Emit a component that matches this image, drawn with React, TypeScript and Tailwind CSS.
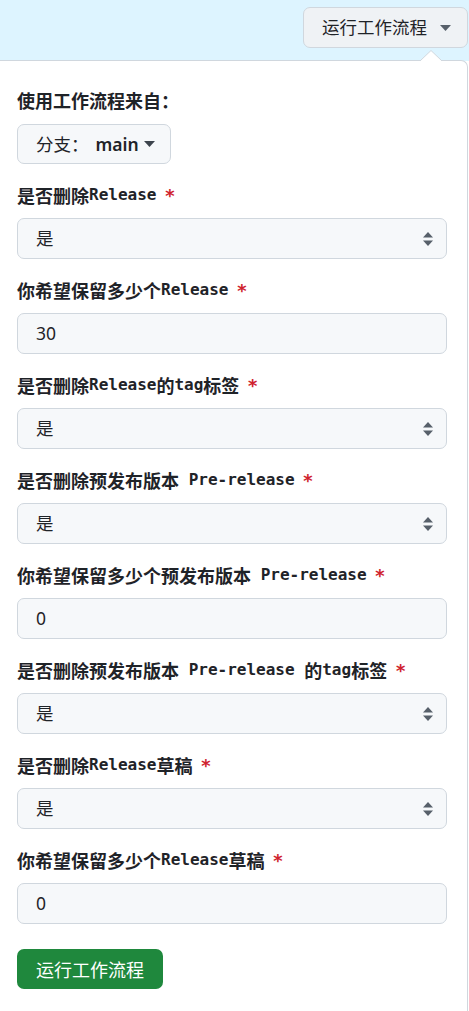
import React from "react";

const CJK = '"Noto Sans CJK SC", "Noto Sans", sans-serif';
const MONO = '"DejaVu Sans Mono", "Liberation Mono", monospace';

function Label({ parts }: { parts: { t: string; mono?: boolean }[] }) {
  return (
    <div className="flex items-center h-[24px] mb-[11px] text-[18px] font-semibold text-[#1f2328] whitespace-pre" style={{ fontFamily: CJK }}>
      {parts.map((p, i) =>
        p.mono ? (
          <span key={i} className="text-[16px] font-bold" style={{ fontFamily: MONO }}>
            {p.t}
          </span>
        ) : (
          <span key={i}>{p.t}</span>
        )
      )}
      <span className="ml-[8px] text-[#cf222e] font-bold" style={{ fontFamily: MONO }}>*</span>
    </div>
  );
}

function SelectBox({ value }: { value: string }) {
  return (
    <div className="flex items-center justify-between h-[41px] w-[430px] rounded-[7px] border border-[#d0d7de] bg-[#f6f8fa] pl-[18px] pr-[13px] text-[17.5px] text-[#1f2328]" style={{ fontFamily: CJK }}>
      <span>{value}</span>
      <svg width="10" height="16" viewBox="0 0 10 16">
        <path d="M0 6.5 L5 1 L10 6.5 Z" fill="#57606a" />
        <path d="M0 9.5 L5 15 L10 9.5 Z" fill="#57606a" />
      </svg>
    </div>
  );
}

function InputBox({ value }: { value: string }) {
  return (
    <div className="flex items-center h-[41px] w-[430px] rounded-[7px] border border-[#d0d7de] bg-[#f6f8fa] pl-[18px] text-[17.5px] text-[#1f2328]" style={{ fontFamily: '"Noto Sans", sans-serif' }}>
      {value}
    </div>
  );
}

function Field({ parts, kind, value }: { parts: { t: string; mono?: boolean }[]; kind: "select" | "input"; value: string }) {
  return (
    <div className="mb-[19px]">
      <Label parts={parts} />
      {kind === "select" ? <SelectBox value={value} /> : <InputBox value={value} />}
    </div>
  );
}

export default function App() {
  return (
    <div className="w-[469px] h-[1011px] bg-white overflow-hidden relative" style={{ fontFamily: CJK }}>
      <div className="h-[61px] bg-[#ddf4ff] flex justify-end items-start pt-[7px]">
        <div className="flex items-center h-[41px] w-[165px] mr-[1px] rounded-[7px] border border-[#d0d7de] bg-[#eff2f5] pl-[18px] text-[17.5px] text-[#1f2328]">
          <span>运行工作流程</span>
          <svg className="ml-[13px]" width="11" height="6" viewBox="0 0 11 6">
            <path d="M0 0 L11 0 L5.5 6 Z" fill="#57606a" />
          </svg>
        </div>
      </div>
      <div className="relative -mt-px ml-[-10px] w-[478px] bg-white border-t border-r border-[#d0d7de] rounded-tr-[7px] pl-[27px] pt-[27px] pb-[40px]">
        <svg className="absolute top-[-11px] left-[430px]" width="22" height="12" viewBox="0 0 22 12">
          <path d="M0 12 L0 11 L11 0.5 L22 11 L22 12 Z" fill="#ffffff" />
          <path d="M0 11 L11 0.5 L22 11" fill="none" stroke="#d0d7de" strokeWidth="1" />
        </svg>
        <div className="flex items-center h-[24px] mb-[12px] text-[18px] font-bold text-[#1f2328]">使用工作流程来自：</div>
        <div className="flex items-center h-[40px] w-[154px] rounded-[7px] border border-[#d0d7de] bg-[#f6f8fa] pl-[18px] text-[17.5px] text-[#1f2328] mb-[19px]">
          <span>分支：</span>
          <span className="ml-[7px] font-semibold" style={{ fontFamily: '"Noto Sans", sans-serif' }}>main</span>
          <svg className="ml-[5px]" width="11" height="6" viewBox="0 0 11 6">
            <path d="M0 0 L11 0 L5.5 6 Z" fill="#3d444d" />
          </svg>
        </div>
        <Field parts={[{ t: "是否删除" }, { t: "Release", mono: true }]} kind="select" value="是" />
        <Field parts={[{ t: "你希望保留多少个" }, { t: "Release", mono: true }]} kind="input" value="30" />
        <Field parts={[{ t: "是否删除" }, { t: "Release", mono: true }, { t: "的" }, { t: "tag", mono: true }, { t: "标签" }]} kind="select" value="是" />
        <Field parts={[{ t: "是否删除预发布版本" }, { t: " Pre-release", mono: true }]} kind="select" value="是" />
        <Field parts={[{ t: "你希望保留多少个预发布版本" }, { t: " Pre-release", mono: true }]} kind="input" value="0" />
        <Field parts={[{ t: "是否删除预发布版本" }, { t: " Pre-release ", mono: true }, { t: "的" }, { t: "tag", mono: true }, { t: "标签" }]} kind="select" value="是" />
        <Field parts={[{ t: "是否删除" }, { t: "Release", mono: true }, { t: "草稿" }]} kind="select" value="是" />
        <Field parts={[{ t: "你希望保留多少个" }, { t: "Release", mono: true }, { t: "草稿" }]} kind="input" value="0" />
        <div className="mt-[25px] flex items-center justify-center h-[40px] w-[146px] rounded-[7px] bg-[#1f883d] text-white text-[18px]">
          运行工作流程
        </div>
      </div>
    </div>
  );
}
